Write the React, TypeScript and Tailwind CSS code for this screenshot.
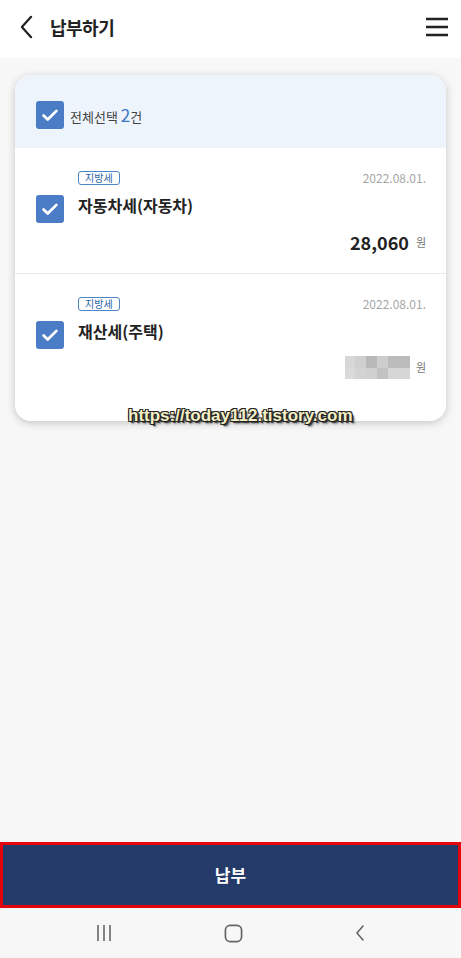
const font = { fontFamily: '"Noto Sans CJK KR", "Noto Sans", sans-serif' };

function Check() {
  return (
    <div className="w-[28px] h-[28px] rounded-[3px] bg-[#4b7cc6] flex items-center justify-center shrink-0">
      <svg viewBox="0 0 24 24" className="w-[22px] h-[22px]" fill="none" stroke="white" strokeWidth="3" strokeLinecap="round" strokeLinejoin="round">
        <path d="M5 12.5l4.5 4.5L19 7.5" />
      </svg>
    </div>
  );
}

function Tag() {
  return (
    <span className="inline-flex items-center h-[14px] px-[6px] rounded-[3px] border border-[#4a86c8] text-[10px] leading-none text-[#2a64a8]">
      지방세
    </span>
  );
}

function Row({ title, children, last }: { title: string; children: React.ReactNode; last?: boolean }) {
  return (
    <div className={last ? "pt-[23px] pb-[42px] pl-[21px] pr-[20px]" : "pt-[23px] pb-[19px] pl-[21px] pr-[20px] border-b border-[#e8e8e8]"}>
      <div className="flex items-center justify-between h-[14px] pl-[42px]">
        <Tag />
        <span className="text-[12px] leading-none text-[#a6a6a6]">2022.08.01.</span>
      </div>
      <div className="flex items-start gap-[14px] mt-[10px]">
        <Check />
        <span className="text-[16px] leading-none font-bold text-[#222] mt-[2px]">{title}</span>
      </div>
      {children}
    </div>
  );
}

export default function App() {
  return (
    <div className="w-[461px] h-[958px] flex flex-col bg-[#f7f7f7]" style={font}>
      {/* top bar */}
      <header className="h-[58px] bg-white flex items-center justify-between pl-[19px] pr-[12px] pb-[4px] shrink-0">
        <div className="flex items-center gap-[16px]">
          <svg viewBox="0 0 16 26" className="w-[15px] h-[24px]" fill="none" stroke="#222" strokeWidth="2.4" strokeLinecap="round" strokeLinejoin="round">
            <path d="M13 2L3 13l10 11" />
          </svg>
          <span className="text-[18px] font-bold text-[#222] tracking-[-0.5px]">납부하기</span>
        </div>
        <svg viewBox="0 0 24 20" className="w-[24px] h-[20px]" fill="none" stroke="#222" strokeWidth="2.6">
          <path d="M1 2h22M1 10h22M1 18h22" />
        </svg>
      </header>

      <main className="flex-1 pt-[17px] px-[15px]">
        <div className="relative bg-white rounded-[16px] shadow-[0_2px_8px_rgba(0,0,0,0.2)]">
          <div className="h-[73px] bg-[#eef4fb] rounded-t-[16px] flex items-start pt-[26px] pl-[21px] gap-[6px]">
            <Check />
            <span className="text-[13px] leading-[28px] text-[#444]">
              전체선택 <span className="text-[17px] text-[#3a78c4]">2</span>건
            </span>
          </div>

          <Row title="자동차세(자동차)">
            <div className="flex items-center justify-end gap-[7px] mt-[7px] h-[24px]">
              <span className="text-[18px] font-bold text-[#222]">28,060</span>
              <span className="text-[11px] text-[#777]">원</span>
            </div>
          </Row>

          <Row title="재산세(주택)" last>
            <div className="flex items-center justify-end gap-[5px] mt-[7px]">
              <div className="grid grid-cols-[10px_11px_11px_11px_22px] grid-rows-2 w-[66px] h-[23px]">
                <div className="bg-[#d7d7d7]" />
                <div className="bg-[#cfcfcf]" />
                <div className="bg-[#b9b9b9]" />
                <div className="bg-[#cdcdcd]" />
                <div className="bg-[#bcbcbc]" />
                <div className="bg-[#dadada]" />
                <div className="bg-[#d3d3d3]" />
                <div className="bg-[#d0d0d0]" />
                <div className="bg-[#c2c2c2]" />
                <div className="bg-[#d6d6d6]" />
              </div>
              <span className="text-[11px] text-[#777]">원</span>
            </div>
          </Row>

          <div
            className="absolute left-[113px] top-[332px] text-[17px] leading-none font-bold text-[#f3efc6] [text-shadow:-1px_-1px_0_#222,1px_-1px_0_#222,-1px_1px_0_#222,1px_1px_0_#222,2px_2px_0_#444,3px_3px_2px_rgba(0,0,0,0.4)]"
            style={{ fontFamily: '"Liberation Sans", sans-serif' }}
          >
            https://today112.tistory.com
          </div>
        </div>
      </main>

      <button className="h-[66px] shrink-0 bg-[#243a68] border-[3px] border-[#e3050b] text-white text-[17px] font-bold">
        납부
      </button>

      <nav className="h-[50px] shrink-0 bg-[#f7f7f7] flex items-center justify-around px-[40px]">
        <svg viewBox="0 0 18 18" className="w-[18px] h-[18px]" fill="none" stroke="#666" strokeWidth="1.6">
          <path d="M3 1v16M9 1v16M15 1v16" />
        </svg>
        <svg viewBox="0 0 20 20" className="w-[19px] h-[19px]" fill="none" stroke="#666" strokeWidth="1.8">
          <rect x="1.5" y="1.5" width="17" height="17" rx="5" />
        </svg>
        <svg viewBox="0 0 12 18" className="w-[12px] h-[18px]" fill="none" stroke="#666" strokeWidth="1.6" strokeLinecap="round">
          <path d="M9 2L3 9l6 7" />
        </svg>
      </nav>
    </div>
  );
}
